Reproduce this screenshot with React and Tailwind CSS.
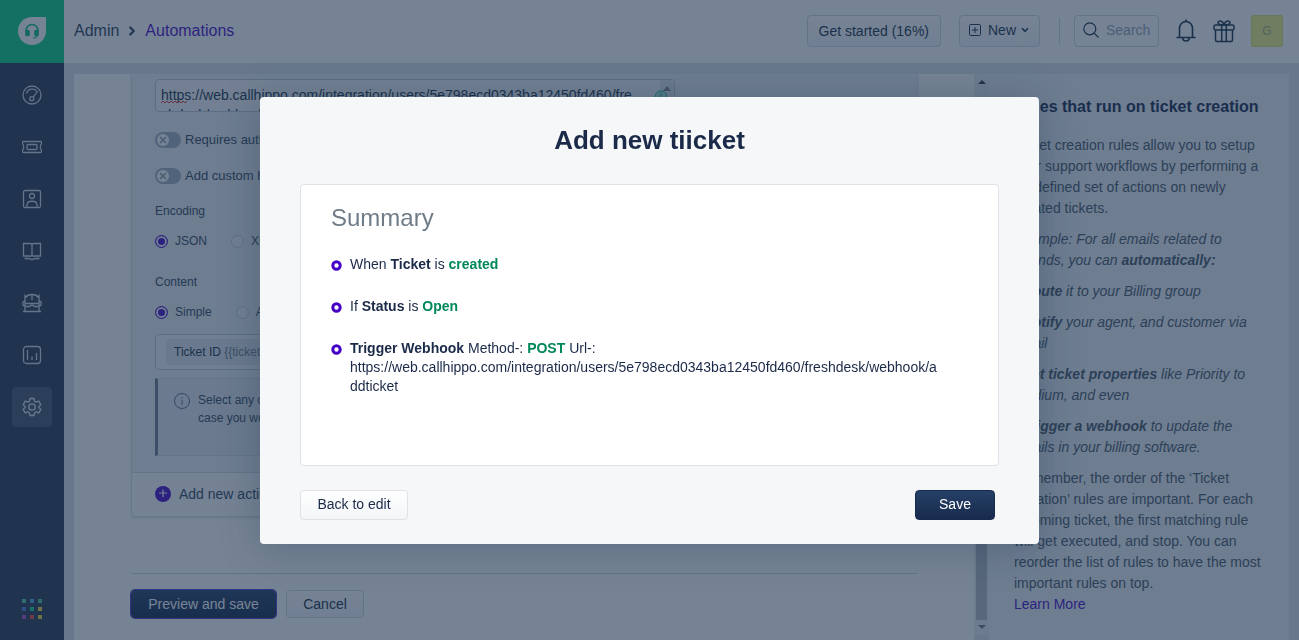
import { ChevronDown, ChevronRight, X } from "lucide-react";

const WEBHOOK_URL =
  "https://web.callhippo.com/integration/users/5e798ecd0343ba12450fd460/freshdesk/webhook/addticket";

const navItems = [
  {
    label: "Dashboard",
    icon: (
      <>
        <circle cx="10" cy="10" r="9" />
        <path d="M4.5 8.5a6 6 0 0 1 10.8-1.7L11.4 11.9" />
        <circle cx="9.8" cy="13.7" r="2" />
      </>
    ),
  },
  {
    label: "Tickets",
    icon: (
      <>
        <path d="M1.5 4.5h17a1 1 0 0 1 1 1V7c-1.6.8-1.6 5.2 0 6v1.5a1 1 0 0 1-1 1h-17a1 1 0 0 1-1-1V13c1.6-.8 1.6-5.2 0-6V5.5a1 1 0 0 1 1-1z" />
        <rect x="5" y="7.5" width="10" height="5" rx="1" />
      </>
    ),
  },
  {
    label: "Contacts",
    icon: (
      <>
        <rect x="1.5" y="1.5" width="17" height="17" rx="1.5" />
        <circle cx="10" cy="7" r="2.5" />
        <path d="M5 18.5V16c0-5 10-5 10 0v2.5" />
      </>
    ),
  },
  {
    label: "Solutions",
    icon: (
      <>
        <path d="M1.5 2.5H8c1.2 0 2 .5 2 1.2 0-.7.8-1.2 2-1.2h6.500V15H12c-1.200 0-2 .3-2 .8 0-.5-.8-.8-2-.8H1.500zM10 3.700v12" />
        <path d="M2.500 17.500H7c1.500 0 2 1.200 3 1.200s1.500-1.200 3-1.200h4.500" />
      </>
    ),
  },
  {
    label: "Bots",
    icon: (
      <>
        <path d="M3 18V1.5M17 18V1.5M1 18.500h18M3.500 4.500c3-4 10-4 13 0M10 1v6M3.500 10.500h13M3 8c-3 0-3 5 0 5M17 8c3 0 3 5 0 5" />
        <path d="M3.500 13.500h4c1 0 1.500-1.500 2.500-1.500s1.500 1.500 2.500 1.500h4" />
      </>
    ),
  },
  {
    label: "Analytics",
    icon: (
      <>
        <rect x="1.5" y="1.5" width="17" height="17" rx="3" />
        <path d="M5.500 5v10M10 11.500V15M14.500 8v7" />
      </>
    ),
  },
  {
    label: "Admin",
    active: true,
    icon: (
      <>
        <path
          strokeLinejoin="round"
          d="M7.300 4.300 8 1.500h4l.7 2.800 1.400.8 2.700-.9 2 3.400-2 2v.8l2 2-2 3.400-2.700-.9-1.400.8-.7 2.800H8l-.7-2.800-1.400-.8-2.700.9-2-3.400 2-2v-.8l-2-2 2-3.400 2.700.9z"
        />
        <circle cx="10" cy="10" r="3.200" />
      </>
    ),
  },
];

const appDots = [
  "bg-[#4cc9a8]",
  "bg-[#4ca8d8]",
  "bg-[#4cc98c]",
  "bg-[#4c78d8]",
  "bg-[#10d888]",
  "bg-[#f0d840]",
  "bg-[#b850c8]",
  "bg-[#f04838]",
  "bg-[#e8d030]",
];

function Sidebar() {
  return (
    <aside className="flex w-16 shrink-0 flex-col bg-[#283a52]">
      <a href="#home" aria-label="Home" className="flex h-[63px] items-center justify-center bg-[#08d080] pb-px">
        <span className="flex size-7 items-center justify-center rounded-full rounded-tr-sm bg-white">
          <svg viewBox="0 0 16 16" className="size-4" fill="none" stroke="#08c080" strokeWidth="1.6">
            <path d="M2 9V7.500a6 6 0 0 1 12 0V9" />
            <path d="M13.500 11.500c0 2.300-1.500 3.500-4.500 3.500" strokeWidth="1.200" />
            <rect x="2" y="7.500" width="3" height="5" rx="1" fill="#08c080" />
            <rect x="11" y="7.500" width="3" height="5" rx="1" fill="#08c080" />
          </svg>
        </span>
      </a>
      <nav className="flex flex-1 flex-col items-center gap-3 pt-3">
        {navItems.map((item) => (
          <a
            key={item.label}
            href="#nav"
            aria-label={item.label}
            className={
              item.active
                ? "flex size-10 items-center justify-center rounded bg-[#46566b] text-[#dfe5ea]"
                : "flex size-10 items-center justify-center rounded text-[#cfd7df]"
            }
          >
            <svg viewBox="0 0 20 20" className="size-5" fill="none" stroke="currentColor" strokeWidth="1.3">
              {item.icon}
            </svg>
          </a>
        ))}
      </nav>
      <button aria-label="Switch apps" className="grid grid-cols-3 gap-1 self-center pb-[21px]">
        {appDots.map((color, i) => (
          <span key={i} className={`size-1 ${color}`} />
        ))}
      </button>
    </aside>
  );
}

function Header() {
  return (
    <header className="flex h-[63px] shrink-0 items-center bg-white pr-4 pb-[2px] pl-[10px] text-[#183247]">
      <div className="flex items-center text-base text-[#2f4258]">
        <span>Admin</span>
        <ChevronRight size={14} strokeWidth={4} className="mx-[6px]" />
        <a href="#automations" className="text-[#4a0bc8]">Automations</a>
      </div>
      <div className="ml-auto flex items-center text-sm">
        <button className="h-8 rounded border border-[#cfd7df] bg-linear-to-b from-white to-[#f3f5f7] px-[11px]">
          Get started (16%)
        </button>
        <button className="ml-[18px] flex h-8 w-[81px] items-center rounded border border-[#cfd7df] bg-linear-to-b from-white to-[#f3f5f7] pb-px pl-2">
          <svg viewBox="0 0 14 14" className="mr-[6px] size-[14px]" fill="none" stroke="currentColor">
            <rect x="1.5" y="1.5" width="11" height="11" rx="1" />
            <path d="M7 4v6M4 7h6" />
          </svg>
          New
          <ChevronDown size={10} strokeWidth={4} className="ml-1" />
        </button>
        <span className="mr-[14px] ml-[19px] h-[26px] w-px bg-[#cfd7df]" />
        <label className="flex h-8 w-[85px] items-center rounded border border-[#cfd7df] pb-px pl-2">
          <svg viewBox="0 0 16 16" className="size-4 shrink-0" fill="none" stroke="currentColor" strokeWidth="1.2">
            <circle cx="6.8" cy="6.8" r="6" />
            <path d="m11.2 11.2 4.3 4.3" />
          </svg>
          <input
            type="text"
            aria-label="Search"
            placeholder="Search"
            className="ml-[7px] w-full min-w-0 bg-transparent outline-none placeholder:text-[#92a2b1]"
          />
        </label>
        <button aria-label="Notifications" className="ml-4">
          <svg viewBox="0 0 22 24" className="h-6 w-[22px]" fill="none" stroke="currentColor" strokeWidth="1.6">
            <path d="M2 18.500h18M4.500 18.500v-9a6.500 7 0 0 1 13 0v9" strokeLinecap="round" />
            <path d="M11 .5v2M7.800 19c0 4 6.400 4 6.400 0" />
          </svg>
        </button>
        <button aria-label="What's new" className="ml-4">
          <svg viewBox="0 0 22 24" className="h-6 w-[22px]" fill="none" stroke="currentColor" strokeWidth="1.5">
            <rect x="1" y="6" width="20" height="5" rx="1.5" />
            <path d="M2.500 11v10a1.500 1.500 0 0 0 1.500 1.500h14a1.500 1.500 0 0 0 1.500-1.500V11M8.700 6v16.500M13.300 6v16.500" />
            <path d="M11 6C9 6 5 5.500 5 3.500S9.500.5 11 6zM11 6c2 0 6-.5 6-2.500S12.500.5 11 6z" />
          </svg>
        </button>
        <button className="ml-4 size-8 rounded-xs border border-[#dfe070] bg-[#eff07c] text-xs text-[#a8ad78]">G</button>
      </div>
    </header>
  );
}

function Toggle({ id, label }) {
  return (
    <div className="flex h-4 items-center gap-1 text-[13px]">
      <button
        id={id}
        role="switch"
        aria-checked="false"
        className="flex h-4 w-[26px] items-center rounded-full bg-[#a4b0bc] px-[2px]"
      >
        <span className="flex size-3 items-center justify-center rounded-full bg-white text-[#92a2b1]">
          <X size={10} strokeWidth={4} />
        </span>
      </button>
      <label htmlFor={id}>{label}</label>
    </div>
  );
}

function RadioGroup({ name, options }) {
  return (
    <div className="mt-3 flex gap-6">
      {options.map((option, i) => (
        <label key={option} className="flex h-[18px] items-center gap-[7px]">
          <input
            type="radio"
            name={name}
            defaultChecked={i === 0}
            className="size-[13px] appearance-none rounded-full border border-[#c3ccd5] bg-[#f3f5f7] checked:border-[#4a0bc8] checked:bg-[#4a0bc8] checked:shadow-[inset_0_0_0_2px_#ebeff3]"
          />
          {option}
        </label>
      ))}
    </div>
  );
}

function ActionsForm() {
  return (
    <main className="min-w-0 flex-1 overflow-hidden bg-white pr-14 pl-[57px]">
      <section className="rounded-b border border-t-0 border-[#dde3e9] bg-[#ebeff3] text-xs text-[#33475b] shadow-sm">
        <div className="px-[23px] pt-[5px] pb-4">
          <div className="relative w-[520px] max-w-full">
            <textarea
              aria-label="Webhook URL"
              spellCheck="false"
              defaultValue={WEBHOOK_URL}
              className="block h-[33px] w-full resize-none overflow-hidden rounded border border-[#bcc8d4] bg-[#f7f8fa] pt-[5px] pr-9 pl-[5px] text-sm/5 break-all text-[#183247]"
            />
            <svg viewBox="0 0 28 4" className="absolute top-[21px] left-[6px] h-1 w-7" fill="none" stroke="#e43538">
              <path d="m0 3 2-2 2 2 2-2 2 2 2-2 2 2 2-2 2 2 2-2 2 2 2-2 2 2 2-2" />
            </svg>
            <span className="absolute top-px right-px flex h-[31px] w-[14px] justify-center bg-[#e4e8ec] pt-[6px]">
              <svg viewBox="0 0 8 5" className="h-[5px] w-2" fill="#7c8794">
                <path d="M4 0 8 5H0z" />
              </svg>
            </span>
            <svg viewBox="0 0 14 14" className="absolute top-[11px] right-[7px] size-[14px]" fill="#b4ecdc" stroke="#15c39a">
              <circle cx="7" cy="7" r="6" />
              <path d="M7 3v4" />
            </svg>
          </div>
          <div className="mt-5 flex flex-col gap-5">
            <Toggle id="requires-auth" label="Requires authentication" />
            <Toggle id="custom-headers" label="Add custom headers" />
          </div>
          <p className="mt-[18px] leading-[18px]">Encoding</p>
          <RadioGroup name="encoding" options={["JSON", "XML"]} />
          <p className="mt-[23px] leading-[18px]">Content</p>
          <RadioGroup name="content" options={["Simple", "Advanced"]} />
          <div className="mt-[13px] flex h-9 items-center rounded border border-[#bcc8d4] bg-[#f3f5f7] px-[10px]">
            <span className="rounded bg-[#e1e6eb] px-2 py-[5px] text-[#183247]">
              Ticket ID <span className="text-[#6f7c87]">{"{{ticket.id}}"}</span>
            </span>
          </div>
          <div className="mt-2 flex h-[78px] gap-2 border border-l-3 border-[#d2d9e0] border-l-[#6f7c87] bg-[#e3e8ed] pt-3 pl-4 leading-[18px]">
            <svg viewBox="0 0 16 16" className="mt-[2px] size-4 shrink-0" fill="none" stroke="#5f6f80">
              <circle cx="8" cy="8" r="7.5" />
              <path d="M8 7v5M8 4v1.5" />
            </svg>
            <p>
              Select any of the ticket properties that you want to send
              <br />
              case you would like to send more, use the advanced option
            </p>
          </div>
        </div>
        <button className="flex h-11 w-full items-center gap-2 rounded-b border-t border-[#cfd7df] bg-[#fbfcfd] px-[23px] pb-px text-sm">
          <svg viewBox="0 0 16 16" className="size-4" fill="none" stroke="white" strokeWidth="1.2">
            <circle cx="8" cy="8" r="8" fill="#4a0bc8" stroke="none" />
            <path d="M8 3.500v7.500M4 7h8" />
          </svg>
          Add new action
        </button>
      </section>
      <div className="mt-14 flex items-center gap-[10px] border-t border-[#cfd7df] pt-4 text-sm">
        <button className="h-7 w-[145px] rounded bg-linear-to-b from-[#264067] to-[#172b4d] text-white ring-1 ring-[#5b35d0]">
          Preview and save
        </button>
        <button className="h-7 w-[78px] rounded border border-[#cfd7df] bg-linear-to-b from-white to-[#f3f5f7] text-[#183247]">
          Cancel
        </button>
      </div>
    </main>
  );
}

function ScrollTrack() {
  return (
    <div className="mb-[5px] flex w-[15px] shrink-0 flex-col items-center bg-[#e8ecef] py-[6px]">
      <svg viewBox="0 0 8 4" className="h-1 w-2" fill="#30343a">
        <path d="M4 0 8 4H0z" />
      </svg>
      <div className="mt-24 mb-[5px] w-[11px] flex-1 bg-[#b3b8be]" />
      <svg viewBox="0 0 8 4" className="h-1 w-2" fill="#70767e">
        <path d="M0 0h8L4 4z" />
      </svg>
    </div>
  );
}

function HelpPanel() {
  return (
    <aside className="w-[300px] shrink-0 overflow-hidden bg-[#ebeff3] px-[25px] pt-[21px] text-sm/[21px] text-[#475867]">
      <h2 className="mb-4 text-base/6 font-bold whitespace-nowrap text-[#172b4d]">Rules that run on ticket creation</h2>
      <div className="flex flex-col gap-[10px]">
        <p>
          Ticket creation rules allow you to setup your support workflows by performing a predefined set of actions on
          newly created tickets.
        </p>
        <p className="italic">
          Example: For all emails related to refunds, you can <b>automatically:</b>
        </p>
        <p className="italic">
          - <b>Route</b> it to your Billing group
        </p>
        <p className="italic">
          - <b>Notify</b> your agent, and customer via email
        </p>
        <p className="italic">
          - <b>Set ticket properties</b> like Priority to Medium, and even
        </p>
        <p className="italic">
          - <b>Trigger a webhook</b> to update the details in your billing software.
        </p>
        <p>
          Remember, the order of the ‘Ticket Creation’ rules are important. For each incoming ticket, the first matching
          rule will get executed, and stop. You can reorder the list of rules to have the most important rules on top.
          <a href="#learn" className="block text-[#4a0bc8]">Learn More</a>
        </p>
      </div>
    </aside>
  );
}

function SummaryItem({ children }) {
  return (
    <li className="flex gap-2">
      <svg viewBox="0 0 11 11" className="mt-[5px] size-[11px] shrink-0" fill="white" stroke="#4400c4" strokeWidth="3">
        <circle cx="5.5" cy="5.5" r="3.7" />
      </svg>
      <p className="break-all">{children}</p>
    </li>
  );
}

function SummaryDialog() {
  return (
    <div className="fixed inset-0 flex items-center justify-center bg-[#1b304e]/60">
      <div
        role="dialog"
        aria-modal="true"
        aria-labelledby="dialog-title"
        className="w-[779px] max-w-full rounded bg-[#f5f7f9] px-10 pt-[27px] pb-6 text-[#1b2a49] shadow-[0_4px_40px_rgba(24,50,71,0.3)]"
      >
        <h1 id="dialog-title" className="text-center text-[26px]/8 font-bold">Add new tiicket</h1>
        <div className="mt-7 min-h-[282px] rounded border border-[#dfe3e7] bg-white px-[30px] pt-[15px]">
          <h2 className="text-2xl/9 text-[#6f7c87]">Summary</h2>
          <ul className="mt-[19px] flex max-w-[610px] flex-col gap-[23px] text-sm/[19px]">
            <SummaryItem>
              When <b>Ticket</b> is <b className="text-[#00875a]">created</b>
            </SummaryItem>
            <SummaryItem>
              If <b>Status</b> is <b className="text-[#00875a]">Open</b>
            </SummaryItem>
            <SummaryItem>
              <b>Trigger Webhook</b> Method-: <b className="text-[#00875a]">POST</b> Url-:
              <br />
              {WEBHOOK_URL}
            </SummaryItem>
          </ul>
        </div>
        <div className="mt-6 flex justify-between pr-1 text-sm">
          <button className="h-[30px] w-[108px] rounded border border-[#dfe3e7] bg-linear-to-b from-white to-[#f3f5f7] pb-px">
            Back to edit
          </button>
          <button className="h-[30px] w-20 rounded border border-[#172b4d] bg-linear-to-b from-[#264067] to-[#172b4d] pb-px text-white">
            Save
          </button>
        </div>
      </div>
    </div>
  );
}

export default function App() {
  return (
    <div className="flex h-screen overflow-hidden bg-[#dce2e9] font-['Liberation_Sans',Arial,sans-serif]">
      <Sidebar />
      <div className="flex min-w-0 flex-1 flex-col">
        <Header />
        <div className="flex min-h-0 flex-1 px-[10px] pt-[11px]">
          <ActionsForm />
          <ScrollTrack />
          <HelpPanel />
        </div>
      </div>
      <SummaryDialog />
    </div>
  );
}
